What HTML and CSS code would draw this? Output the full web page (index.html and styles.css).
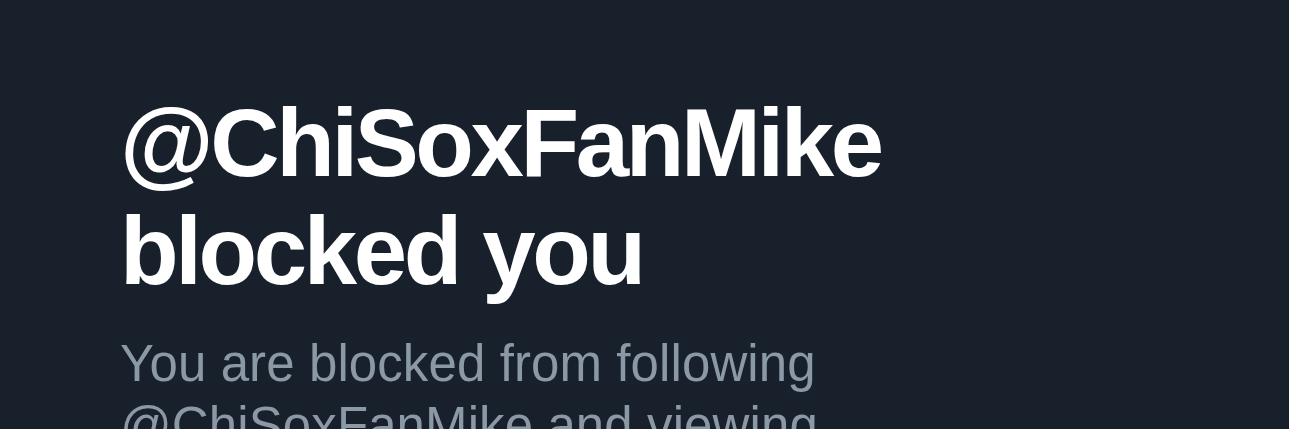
FILE: index.html
```html
<!DOCTYPE html>
<html lang="en">
<head>
    <meta charset="UTF-8">
    <meta name="viewport" content="width=device-width, initial-scale=1.0">
    <title>Blocked</title>
    <link rel="stylesheet" href="styles.css">
</head>
<body>
    <div class="blocked">
        <h1 class="blocked-title">@ChiSoxFanMike blocked you</h1>
        <p class="blocked-text">You are blocked from following @ChiSoxFanMike and viewing @ChiSoxFanMike's posts.</p>
    </div>
</body>
</html>
```

FILE: styles.css
```css
body {
    margin: 0;
    padding: 0;
    background-color: #17202b;
    font-family: "Liberation Sans", Arial, sans-serif;
    overflow: hidden;
}

.blocked {
    max-width: 800px;
    padding: 89px 0 0 120px;
}

.blocked-title {
    margin: 0;
    color: #ffffff;
    font-size: 96px;
    font-weight: 700;
    line-height: 108px;
    letter-spacing: -3.4px;
}

.blocked-text {
    margin: 28px 0 0 0;
    color: #8b98a5;
    font-size: 51px;
    line-height: 62px;
    letter-spacing: 0.1px;
}
```
